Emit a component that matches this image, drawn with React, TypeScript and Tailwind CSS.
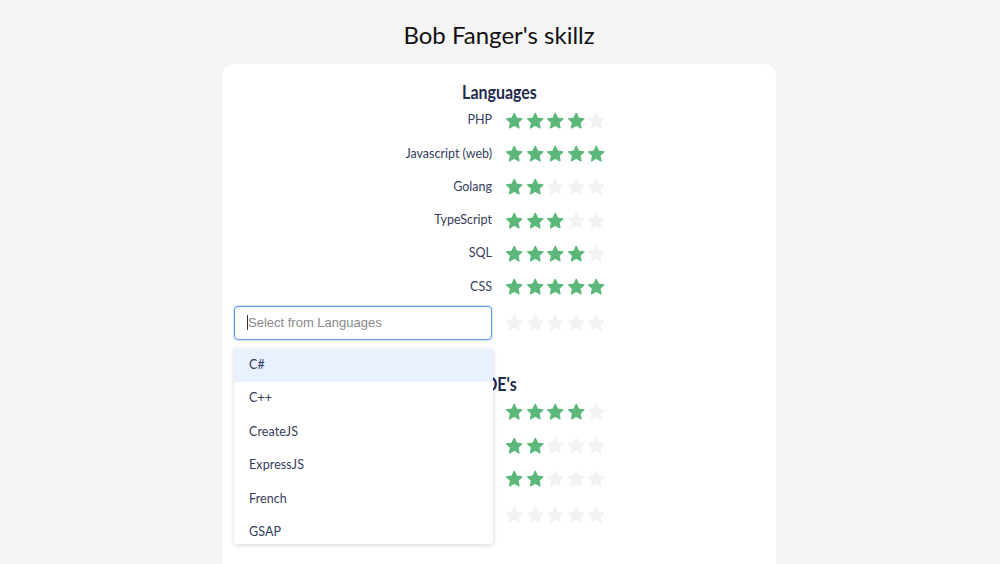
import React from "react";

type Skill = { name: string; rating: number };

const languages: Skill[] = [
  { name: "PHP", rating: 4 },
  { name: "Javascript (web)", rating: 5 },
  { name: "Golang", rating: 2 },
  { name: "TypeScript", rating: 3 },
  { name: "SQL", rating: 4 },
  { name: "CSS", rating: 5 },
];

const ides: Skill[] = [
  { name: "VS Code", rating: 4 },
  { name: "PhpStorm", rating: 2 },
  { name: "Vim", rating: 2 },
];

const options = ["C#", "C++", "CreateJS", "ExpressJS", "French", "GSAP"];

function Star({ filled }: { filled: boolean }) {
  return (
    <svg viewBox="0 0 24 24" className="h-[20px] w-[20.5px]">
      <path
        d="M12 2.8l2.75 5.9 6.45.75-4.78 4.4 1.28 6.37L12 17.05 6.3 20.22l1.28-6.37L2.8 9.45l6.45-.75z"
        fill={filled ? "#5cb87a" : "#f2f2f2"}
        stroke={filled ? "#5cb87a" : "#f2f2f2"}
        strokeWidth="1.6"
        strokeLinejoin="round"
      />
    </svg>
  );
}

function Stars({ rating }: { rating: number }) {
  return (
    <div className="flex items-center">
      {[1, 2, 3, 4, 5].map((i) => (
        <Star key={i} filled={i <= rating} />
      ))}
    </div>
  );
}

function Row({ skill }: { skill: Skill }) {
  return (
    <div className="flex h-[33.3px] items-center">
      <div className="w-[258px] text-right text-[12.5px] text-[#343c5c]">{skill.name}</div>
      <div className="ml-[12px]">
        <Stars rating={skill.rating} />
      </div>
    </div>
  );
}

function Section({
  title,
  skills,
  placeholder,
  open,
}: {
  title: string;
  skills: Skill[];
  placeholder: string;
  open?: boolean;
}) {
  return (
    <section>
      <h2 className="text-center text-[19px] leading-6 font-bold text-[#1f2a4d]">
        <span className="inline-block scale-x-[0.84]">{title}</span>
      </h2>
      {skills.map((s) => (
        <Row key={s.name} skill={s} />
      ))}
      <div className="relative flex h-[38px] items-center">
        <div className="w-[258px]">
          <div
            className={`flex h-[34px] items-center rounded border bg-white px-[12px] text-[13px] ${
              open ? "border-[#5b9bea] shadow-[0_0_0_1px_rgba(91,155,234,0.25)]" : "border-[#dcdcdc]"
            }`}
          >
            {open && <span className="h-[15px] w-px bg-[#333]" />}
            <span className="text-[#8a8a8a] [font-family:'Liberation_Sans',Arial,sans-serif]">{placeholder}</span>
          </div>
        </div>
        <div className="ml-[12px]">
          <Stars rating={0} />
        </div>
        {open && (
          <ul className="absolute top-[45px] left-0 z-10 h-[195px] w-[259px] overflow-hidden rounded-b bg-white shadow-[0_1px_5px_rgba(0,0,0,0.18)]">
            {options.map((o, i) => (
              <li
                key={o}
                className={`flex h-[33.4px] items-center px-[15px] text-[12.5px] tracking-[0.1px] text-[#343c5c] ${
                  i === 0 ? "bg-[#e8f1fd]" : ""
                }`}
              >
                {o}
              </li>
            ))}
          </ul>
        )}
      </div>
    </section>
  );
}

export default function App() {
  return (
    <main className="min-h-[564px] overflow-hidden bg-[#f5f5f5] [font-family:Lato,'Noto_Sans',sans-serif]">
      <h1 className="pt-[20px] pr-[2px] text-center text-[24px] leading-[30px] text-[#111]">Bob Fanger's skillz</h1>
      <div className="mx-auto mt-[14px] h-[520px] w-[554px] -translate-x-px rounded-xl bg-white px-3 pt-4">
        <Section title="Languages" skills={languages} placeholder="Select from Languages" open />
        <div className="mt-[30px]">
          <Section title="IDE's" skills={ides} placeholder="Select from IDE's" />
        </div>
      </div>
    </main>
  );
}
